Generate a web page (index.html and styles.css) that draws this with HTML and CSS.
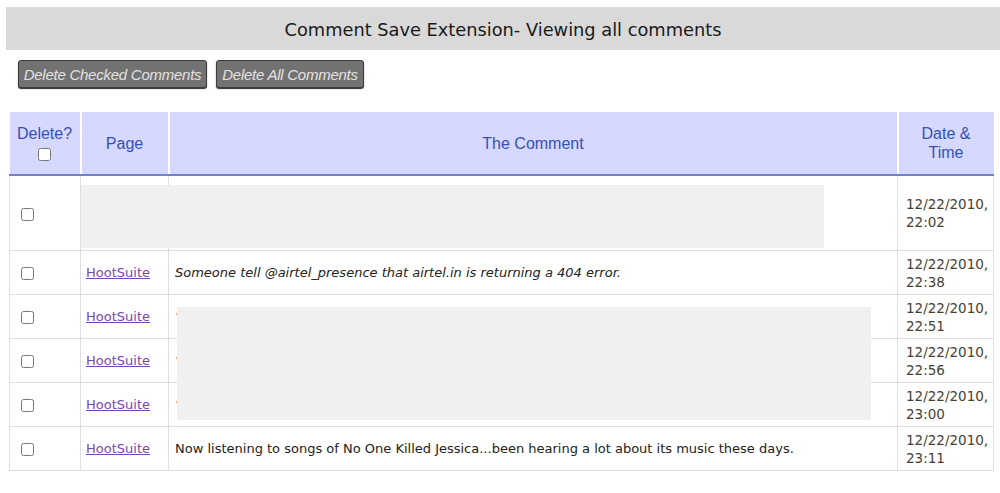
FILE: index.html
```html
<!DOCTYPE html>
<html>
<head>
<meta charset="utf-8">
<title>Comment Save Extension</title>
<link rel="stylesheet" href="styles.css">
</head>
<body>
<div class="page">
  <h1 class="title">Comment Save Extension- Viewing all comments</h1>
  <div class="actions">
    <button class="btn btn-checked">Delete Checked Comments</button>
    <button class="btn btn-all">Delete All Comments</button>
  </div>
  <div class="table-wrap">
    <table class="comments">
      <colgroup>
        <col class="c-del"><col class="c-page"><col class="c-comment"><col class="c-date">
      </colgroup>
      <thead>
        <tr>
          <th class="h-del">Delete?<br><input type="checkbox" class="cb"></th>
          <th>Page</th>
          <th>The Comment</th>
          <th>Date &amp;<br>Time</th>
        </tr>
      </thead>
      <tbody>
        <tr class="r-tall">
          <td class="del"><input type="checkbox" class="cb"></td>
          <td></td>
          <td></td>
          <td class="date">12/22/2010,<br>22:02</td>
        </tr>
        <tr>
          <td class="del"><input type="checkbox" class="cb"></td>
          <td class="page-cell"><a href="#" class="link">HootSuite</a></td>
          <td class="comment italic">Someone tell @airtel_presence that airtel.in is returning a 404 error.</td>
          <td class="date">12/22/2010,<br>22:38</td>
        </tr>
        <tr>
          <td class="del"><input type="checkbox" class="cb"></td>
          <td class="page-cell"><a href="#" class="link">HootSuite</a></td>
          <td class="comment"><span class="peek">‘</span></td>
          <td class="date">12/22/2010,<br>22:51</td>
        </tr>
        <tr>
          <td class="del"><input type="checkbox" class="cb"></td>
          <td class="page-cell"><a href="#" class="link">HootSuite</a></td>
          <td class="comment"><span class="peek">‘</span></td>
          <td class="date">12/22/2010,<br>22:56</td>
        </tr>
        <tr>
          <td class="del"><input type="checkbox" class="cb"></td>
          <td class="page-cell"><a href="#" class="link">HootSuite</a></td>
          <td class="comment"><span class="peek">‘</span></td>
          <td class="date">12/22/2010,<br>23:00</td>
        </tr>
        <tr>
          <td class="del"><input type="checkbox" class="cb"></td>
          <td class="page-cell"><a href="#" class="link">HootSuite</a></td>
          <td class="comment">Now listening to songs of No One Killed Jessica...been hearing a lot about its music these days.</td>
          <td class="date">12/22/2010,<br>23:11</td>
        </tr>
      </tbody>
    </table>
    <div class="redact redact-top"></div>
    <div class="redact redact-mid"></div>
  </div>
</div>
</body>
</html>
```

FILE: styles.css
```css
html, body {
  margin: 0;
  padding: 0;
  background: #ffffff;
}

.page {
  padding-top: 7px;
  font-family: "DejaVu Sans", Verdana, sans-serif;
}

.title {
  margin: 0 0 0 6px;
  height: 43px;
  background: #d9d9d9;
  display: flex;
  align-items: center;
  justify-content: center;
  font-family: "DejaVu Sans", Verdana, sans-serif;
  font-weight: normal;
  font-size: 17.8px;
  color: #1a1a1a;
  padding-top: 2px;
  box-sizing: border-box;
}

.actions {
  display: flex;
  gap: 9px;
  margin: 10px 0 0 18px;
}

.btn {
  height: 28px;
  padding: 0;
  background: #727272;
  border: 1px solid #3c3c3c;
  border-radius: 3px;
  box-shadow: 0 1px 1px #2a2a2a;
  color: #e2e2e2;
  font-family: "Liberation Sans", Arial, sans-serif;
  font-style: italic;
  font-size: 15px;
  letter-spacing: -0.25px;
}

.btn-checked { width: 189px; }
.btn-all { width: 148px; }

.table-wrap {
  position: relative;
  margin: 24px 0 0 9px;
  width: 984px;
}

.comments {
  width: 984px;
  border-collapse: collapse;
  table-layout: fixed;
}

.c-del { width: 71px; }
.c-page { width: 88px; }
.c-comment { width: 729px; }
.c-date { width: 96px; }

.comments th {
  height: 62px;
  background: #d7d8ff;
  color: #3351b9;
  font-family: "Liberation Sans", Arial, sans-serif;
  font-weight: normal;
  font-size: 16px;
  line-height: 19px;
  text-align: center;
  vertical-align: middle;
  border-left: 2px solid #ffffff;
  border-bottom: 2px solid #7282c9;
  padding: 0;
}

.comments th:first-child { border-left: 0; }

.h-del .cb {
  margin: 0;
  margin-top: 2px;
}

.comments td {
  border: 1px solid #dedede;
  height: 43px;
  padding: 0;
  vertical-align: middle;
  font-size: 13px;
  color: #222;
}

.comments tr.r-tall td { height: 74px; }

.comments td.del {
  padding-left: 11px;
}

.cb {
  width: 13px;
  height: 13px;
  margin: 0;
  vertical-align: middle;
}

.page-cell {
  padding-left: 5px !important;
}

.link {
  color: #7a45b1;
  text-decoration: underline;
  font-size: 13px;
}

.comment {
  padding-left: 6px !important;
  white-space: nowrap;
  color: #2a2a2a;
}

.peek {
  color: #d9a070;
}

.italic { font-style: italic; }

.date {
  padding-left: 8px !important;
  color: #463f36 !important;
  line-height: 18px;
  font-size: 13.5px !important;
}

.redact {
  position: absolute;
  background: #f0f0f0;
}

.redact-top {
  left: 72px;
  top: 73px;
  width: 743px;
  height: 63px;
}

.redact-mid {
  left: 168px;
  top: 195px;
  width: 694px;
  height: 113px;
}
```
